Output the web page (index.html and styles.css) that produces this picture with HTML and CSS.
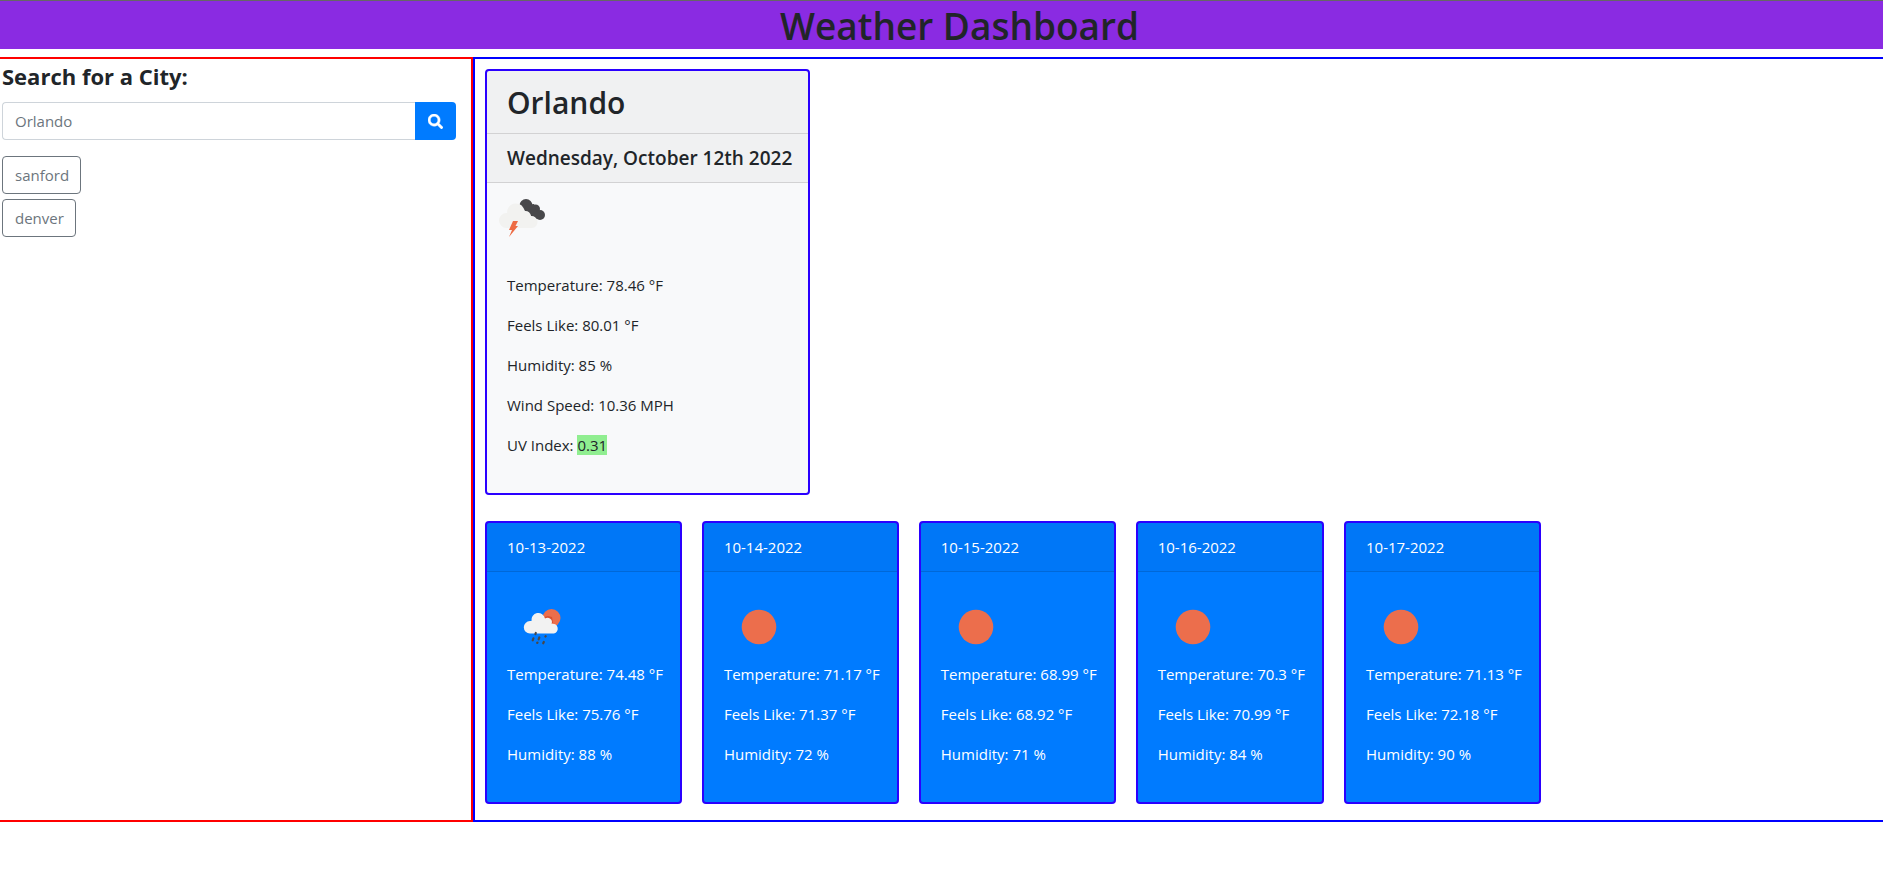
FILE: index.html
```html
<!DOCTYPE html>
<html lang="en">
<head>
<meta charset="utf-8">
<meta name="viewport" content="width=device-width, initial-scale=1">
<title>Weather Dashboard</title>
<link rel="stylesheet" href="styles.css">
</head>
<body>
<svg class="sprite" aria-hidden="true">
  <symbol id="sun" viewBox="0 0 70 70"><circle cx="35" cy="35" r="17.3" fill="#ec6e4c"/></symbol>
</svg>
<header class="page-header"><h1>Weather Dashboard</h1></header>
<div class="layout">
  <aside class="sidebar">
    <h2 class="search-title"><label for="city">Search for a City:</label></h2>
    <form class="search">
      <input id="city" type="text" placeholder="Orlando">
      <button type="button" aria-label="Search"><svg viewBox="0 0 512 512"><path fill="currentColor" stroke="currentColor" stroke-width="14" d="M505 442.7L405.3 343c-4.5-4.5-10.6-7-17-7H372c27.6-35.3 44-79.7 44-128C416 93.1 322.9 0 208 0S0 93.1 0 208s93.1 208 208 208c48.3 0 92.7-16.4 128-44v16.3c0 6.4 2.5 12.5 7 17l99.7 99.7c9.4 9.4 24.6 9.4 33.9 0l28.3-28.3c9.4-9.4 9.4-24.6.1-34zM208 336c-70.7 0-128-57.2-128-128 0-70.7 57.2-128 128-128 70.7 0 128 57.2 128 128 0 70.7-57.2 128-128 128z"/></svg></button>
    </form>
    <div class="history">
      <button type="button">sanford</button>
      <button type="button">denver</button>
    </div>
  </aside>
  <main class="content">
    <section class="card today">
      <h2 class="card-header city">Orlando</h2>
      <h3 class="card-header date">Wednesday, October 12th 2022</h3>
      <div class="card-body">
        <svg class="icon" viewBox="0 0 70 70">
          <g fill="#48484a"><circle cx="39" cy="22.500" r="6.500"/><circle cx="48.500" cy="26" r="4.500"/><circle cx="53" cy="32" r="5"/><path d="M38 22l9-1 3 8v7l-5-2-5-5z"/></g>
          <path fill="#f2f2f0" d="M19.500 45a7.500 7.500 0 0 1 0-15h.7a8.700 8.700 0 0 1 16.300-5l1.500 3a5.500 5.500 0 0 1 6 5 6 6 0 0 1 1 12z"/>
          <path fill="#ed6b43" d="M26 38h5l-2.500 5h2.500l-9 11 3-7h-3z"/>
        </svg>
        <p>Temperature: 78.46 °F</p>
        <p>Feels Like: 80.01 °F</p>
        <p>Humidity: 85 %</p>
        <p>Wind Speed: 10.36 MPH</p>
        <p>UV Index: <span class="uv">0.31</span></p>
      </div>
    </section>
    <section class="forecast">
      <article class="card day">
        <div class="card-header">10-13-2022</div>
        <div class="card-body">
          <svg class="icon" viewBox="0 0 70 70">
            <circle cx="44.500" cy="26" r="9" fill="#ec6e4c"/>
            <path fill="#d9502f" d="M37 25l4-1 4 1 1 6h-8z"/>
            <path fill="#f2f2f2" d="M23 41.500a6.200 6.200 0 0 1 0-12.400h1.500a6.800 6.800 0 0 1 13.500-2.500 4.300 4.300 0 0 1 6.500 5.200 5 5 0 0 1 2.500 9.700z"/>
            <path fill="none" stroke="#48484a" stroke-width="2.200" stroke-linecap="round" d="M28.800 41l-.4 1.200M26.400 46.300l-.7 2M32.300 45.500l-.7 1.800M38.700 44.200l-.3.300M30.500 50.600l-.3.300M36.800 50l-.6 1.300"/>
          </svg>
          <p>Temperature: 74.48 °F</p>
          <p>Feels Like: 75.76 °F</p>
          <p>Humidity: 88 %</p>
        </div>
      </article>
      <article class="card day">
        <div class="card-header">10-14-2022</div>
        <div class="card-body">
          <svg class="icon"><use href="#sun"/></svg>
          <p>Temperature: 71.17 °F</p>
          <p>Feels Like: 71.37 °F</p>
          <p>Humidity: 72 %</p>
        </div>
      </article>
      <article class="card day">
        <div class="card-header">10-15-2022</div>
        <div class="card-body">
          <svg class="icon"><use href="#sun"/></svg>
          <p>Temperature: 68.99 °F</p>
          <p>Feels Like: 68.92 °F</p>
          <p>Humidity: 71 %</p>
        </div>
      </article>
      <article class="card day">
        <div class="card-header">10-16-2022</div>
        <div class="card-body">
          <svg class="icon"><use href="#sun"/></svg>
          <p>Temperature: 70.3 °F</p>
          <p>Feels Like: 70.99 °F</p>
          <p>Humidity: 84 %</p>
        </div>
      </article>
      <article class="card day">
        <div class="card-header">10-17-2022</div>
        <div class="card-body">
          <svg class="icon"><use href="#sun"/></svg>
          <p>Temperature: 71.13 °F</p>
          <p>Feels Like: 72.18 °F</p>
          <p>Humidity: 90 %</p>
        </div>
      </article>
    </section>
  </main>
</div>
</body>
</html>
```
FILE: styles.css
```css
*, *::before, *::after { box-sizing: border-box; }
body {
  margin: 0;
  background: #fff;
  color: #212529;
  font: 400 15px/24px "Segoe UI", "Open Sans", "Noto Sans", sans-serif;
}
h1, h2, h3, p { margin: 0; }
button, input { font: inherit; }
.sprite { display: none; }

.page-header {
  margin-bottom: 8px;
  padding: 2px 0 0 36px;
  border-top: 1px solid #666;
  background: #8a2be2;
  text-align: center;
}
.page-header h1 { font-size: 37px; line-height: 46px; font-weight: 600; }

.layout { display: flex; }
.sidebar {
  flex: 0 0 473px;
  padding: 3px 15px 0 2px;
  border: solid #f00;
  border-width: 2px 2px 2px 0;
}
.search-title { margin-bottom: 11px; font-size: 22px; line-height: 29px; font-weight: 700; }
.search { display: flex; margin-bottom: 16px; }
.search input {
  flex: 1;
  min-width: 0;
  height: 38px;
  padding: 6px 12px;
  border: 1px solid #ced4da;
  border-right: 0;
  border-radius: 4px 0 0 4px;
  background: #fff;
  color: #495057;
}
.search input::placeholder { color: #6c757d; opacity: 1; }
.search button {
  display: flex;
  align-items: center;
  justify-content: center;
  width: 41px;
  border: 0;
  border-radius: 0 4px 4px 0;
  background: #007bff;
  color: #fff;
}
.search svg { width: 15px; height: 15px; }
.history { display: flex; flex-direction: column; align-items: flex-start; gap: 5px; }
.history button {
  height: 38px;
  padding: 0 11px 0 12px;
  border: 1px solid #6c757d;
  border-radius: 4px;
  background: transparent;
  color: #6c757d;
}

.content {
  flex: 1;
  display: flex;
  flex-direction: column;
  align-items: flex-start;
  gap: 26px;
  padding: 10px 10px 16px;
  border: solid #00f;
  border-width: 2px 0 2px 2px;
}
.card { border: 2px solid #2a00ff; border-radius: 4px; }
.card-header {
  padding: 12px 16px 12px 20px;
  border-bottom: 1px solid rgba(0, 0, 0, .125);
  background: rgba(0, 0, 0, .03);
}
.card-body { padding: 20px; }
.card-body p { margin-bottom: 16px; }
.icon { display: block; width: 70px; height: 70px; }

.today { background: #f8f9fa; }
.city { padding-top: 14px; font-size: 30px; line-height: 36px; font-weight: 600; }
.date { font-size: 19px; font-weight: 600; }
.today .card-body { padding-top: 0; }
.today .icon { margin: 0 0 20px -20px; }
.uv { background: #90ee90; }

.forecast { display: flex; flex-wrap: wrap; gap: 20px; }
.day { background: #007bff; color: #fff; }
.day .card-body { padding-right: 17px; }
```
